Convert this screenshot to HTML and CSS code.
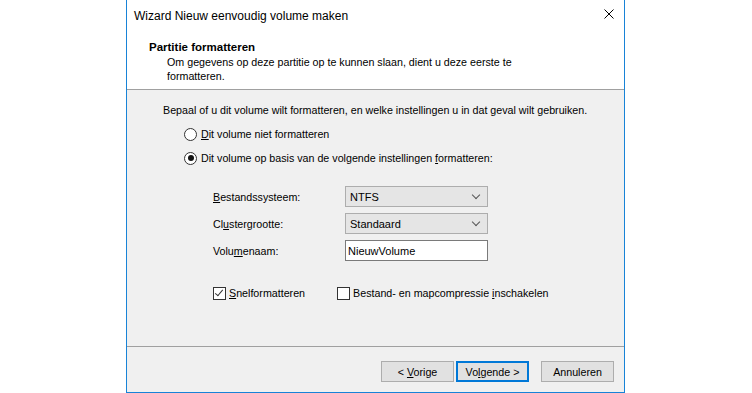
FILE: index.html
```html
<!DOCTYPE html>
<html lang="nl">
<head>
    <meta charset="UTF-8">
    <title>Wizard Nieuw eenvoudig volume maken</title>
    <link rel="stylesheet" href="styles.css">
</head>
<body>

    <div class="window">

        <div class="titlebar">
            <span class="title">Wizard Nieuw eenvoudig volume maken</span>
            <span class="close">
                <svg width="10" height="10" viewBox="0 0 10 10">
                    <path d="M0.5 0.5 L9.5 9.5 M9.5 0.5 L0.5 9.5" stroke="#000" stroke-width="1" fill="none"/>
                </svg>
            </span>
        </div>

        <div class="header">
            <div class="heading">Partitie formatteren</div>
            <div class="subheading">Om gegevens op deze partitie op te kunnen slaan, dient u deze eerste te<br>formatteren.</div>
        </div>

        <div class="content">
            <div class="intro">Bepaal of u dit volume wilt formatteren, en welke instellingen u in dat geval wilt gebruiken.</div>

            <div class="options">
                <label class="radio"><span class="circle"></span><span><u>D</u>it volume niet formatteren</span></label>
                <label class="radio checked"><span class="circle"></span><span>Dit volume op basis van de volgende instellingen <u>f</u>ormatteren:</span></label>
            </div>

            <div class="settings">
                <div class="field">
                    <span class="label"><u>B</u>estandssysteem:</span>
                    <div class="combo">NTFS <span class="chevron"></span></div>
                </div>
                <div class="field">
                    <span class="label">Cl<u>u</u>stergrootte:</span>
                    <div class="combo">Standaard <span class="chevron"></span></div>
                </div>
                <div class="field">
                    <span class="label">Volu<u>m</u>enaam:</span>
                    <div class="textbox">NieuwVolume</div>
                </div>
            </div>

            <div class="checks">
                <label class="check checked"><span class="box"></span><span><u>S</u>nelformatteren</span></label>
                <label class="check"><span class="box"></span><span>Bestand- en mapcompressie <u>i</u>nschakelen</span></label>
            </div>
        </div>

        <div class="footer">
            <button class="btn">&lt; <u>V</u>orige</button>
            <button class="btn default">Vo<u>l</u>gende &gt;</button>
            <button class="btn cancel">Annuleren</button>
        </div>

    </div>

</body>
</html>
```

FILE: styles.css
```css
:root{
    --font-primary: "Liberation Sans", Arial, sans-serif;
    --window-border: #1883d7;
    --dialog-bg: #f0f0f0;
    --etched: #a0a0a0;
}

body{
    margin: 0;
    background: #fff;
    font-family: var(--font-primary);
    font-size: 10.7px;
    color: #000;
}

u{
    text-decoration-thickness: 1px;
    text-underline-offset: 1px;
}

.window{
    margin-left: 126px;
    width: 497px;
    height: 392px;
    border: 1px solid var(--window-border);
    border-top: none;
    background: var(--dialog-bg);
    display: flex;
    flex-direction: column;
}

.titlebar{
    height: 31px;
    background: #fff;
    display: flex;
    align-items: center;
    justify-content: space-between;
    padding-left: 7px;
    padding-right: 10px;
}

.title{
    font-size: 12px;
}

.close{
    display: flex;
    margin-top: -3px;
}

.header{
    height: 59px;
    background: #fff;
    border-bottom: 1px solid var(--etched);
    padding-left: 22px;
    box-sizing: border-box;
    padding-top: 9px;
}

.heading{
    font-weight: bold;
    font-size: 11.5px;
    line-height: 14px;
}

.subheading{
    margin-left: 18px;
    margin-top: 2px;
    line-height: 13.5px;
}

.content{
    flex: 1;
    padding: 8px 0 0 36px;
}

.intro{
    line-height: 24px;
}

.options{
    margin-left: 21px;
}

.radio, .check{
    display: flex;
    align-items: center;
    gap: 4px;
    height: 24px;
}

.circle{
    width: 11px;
    height: 11px;
    border: 1px solid #333;
    border-radius: 50%;
    background: #fff;
    display: flex;
    align-items: center;
    justify-content: center;
}

.radio.checked .circle::after{
    content: "";
    width: 6px;
    height: 6px;
    border-radius: 50%;
    background: #111;
}

.settings{
    margin-left: 50px;
    margin-top: 16px;
    display: flex;
    flex-direction: column;
    gap: 6px;
}

.field{
    display: flex;
    align-items: center;
    height: 21px;
}

.label{
    width: 132px;
}

.combo{
    width: 137px;
    height: 19px;
    border: 1px solid #adadad;
    background: #e5e5e5;
    display: flex;
    align-items: center;
    justify-content: space-between;
    padding-left: 4px;
    font-size: 11px;
}

.chevron{
    width: 5px;
    height: 5px;
    border-right: 1px solid #555;
    border-bottom: 1px solid #555;
    transform: rotate(45deg);
    margin-right: 8px;
    margin-top: -4px;
}

.textbox{
    width: 139px;
    height: 19px;
    border: 1px solid #7a7a7a;
    background: #fff;
    display: flex;
    align-items: center;
    padding-left: 2px;
    font-size: 11px;
}

.checks{
    margin-left: 50px;
    margin-top: 20px;
    display: flex;
    gap: 32px;
}

.check{
    gap: 3px;
}

.box{
    width: 11px;
    height: 11px;
    border: 1px solid #333;
    background: #fff;
    position: relative;
}

.check.checked .box::after{
    content: "";
    position: absolute;
    left: 3px;
    top: 0px;
    width: 3px;
    height: 7px;
    border-right: 1px solid #333;
    border-bottom: 1px solid #333;
    transform: rotate(40deg);
}

.footer{
    height: 46px;
    border-top: 1px solid var(--etched);
    display: flex;
    justify-content: flex-end;
    align-items: flex-start;
    padding: 14px 10px 0 0;
    box-sizing: border-box;
}

.btn{
    font-family: var(--font-primary);
    font-size: 10.7px;
    width: 73px;
    height: 21px;
    padding: 0;
    background: #e1e1e1;
    border: 1px solid #adadad;
    color: #000;
}

.btn.default{
    border: 2px solid #0078d7;
    margin-left: 2px;
}

.btn.cancel{
    margin-left: 12px;
}
```
